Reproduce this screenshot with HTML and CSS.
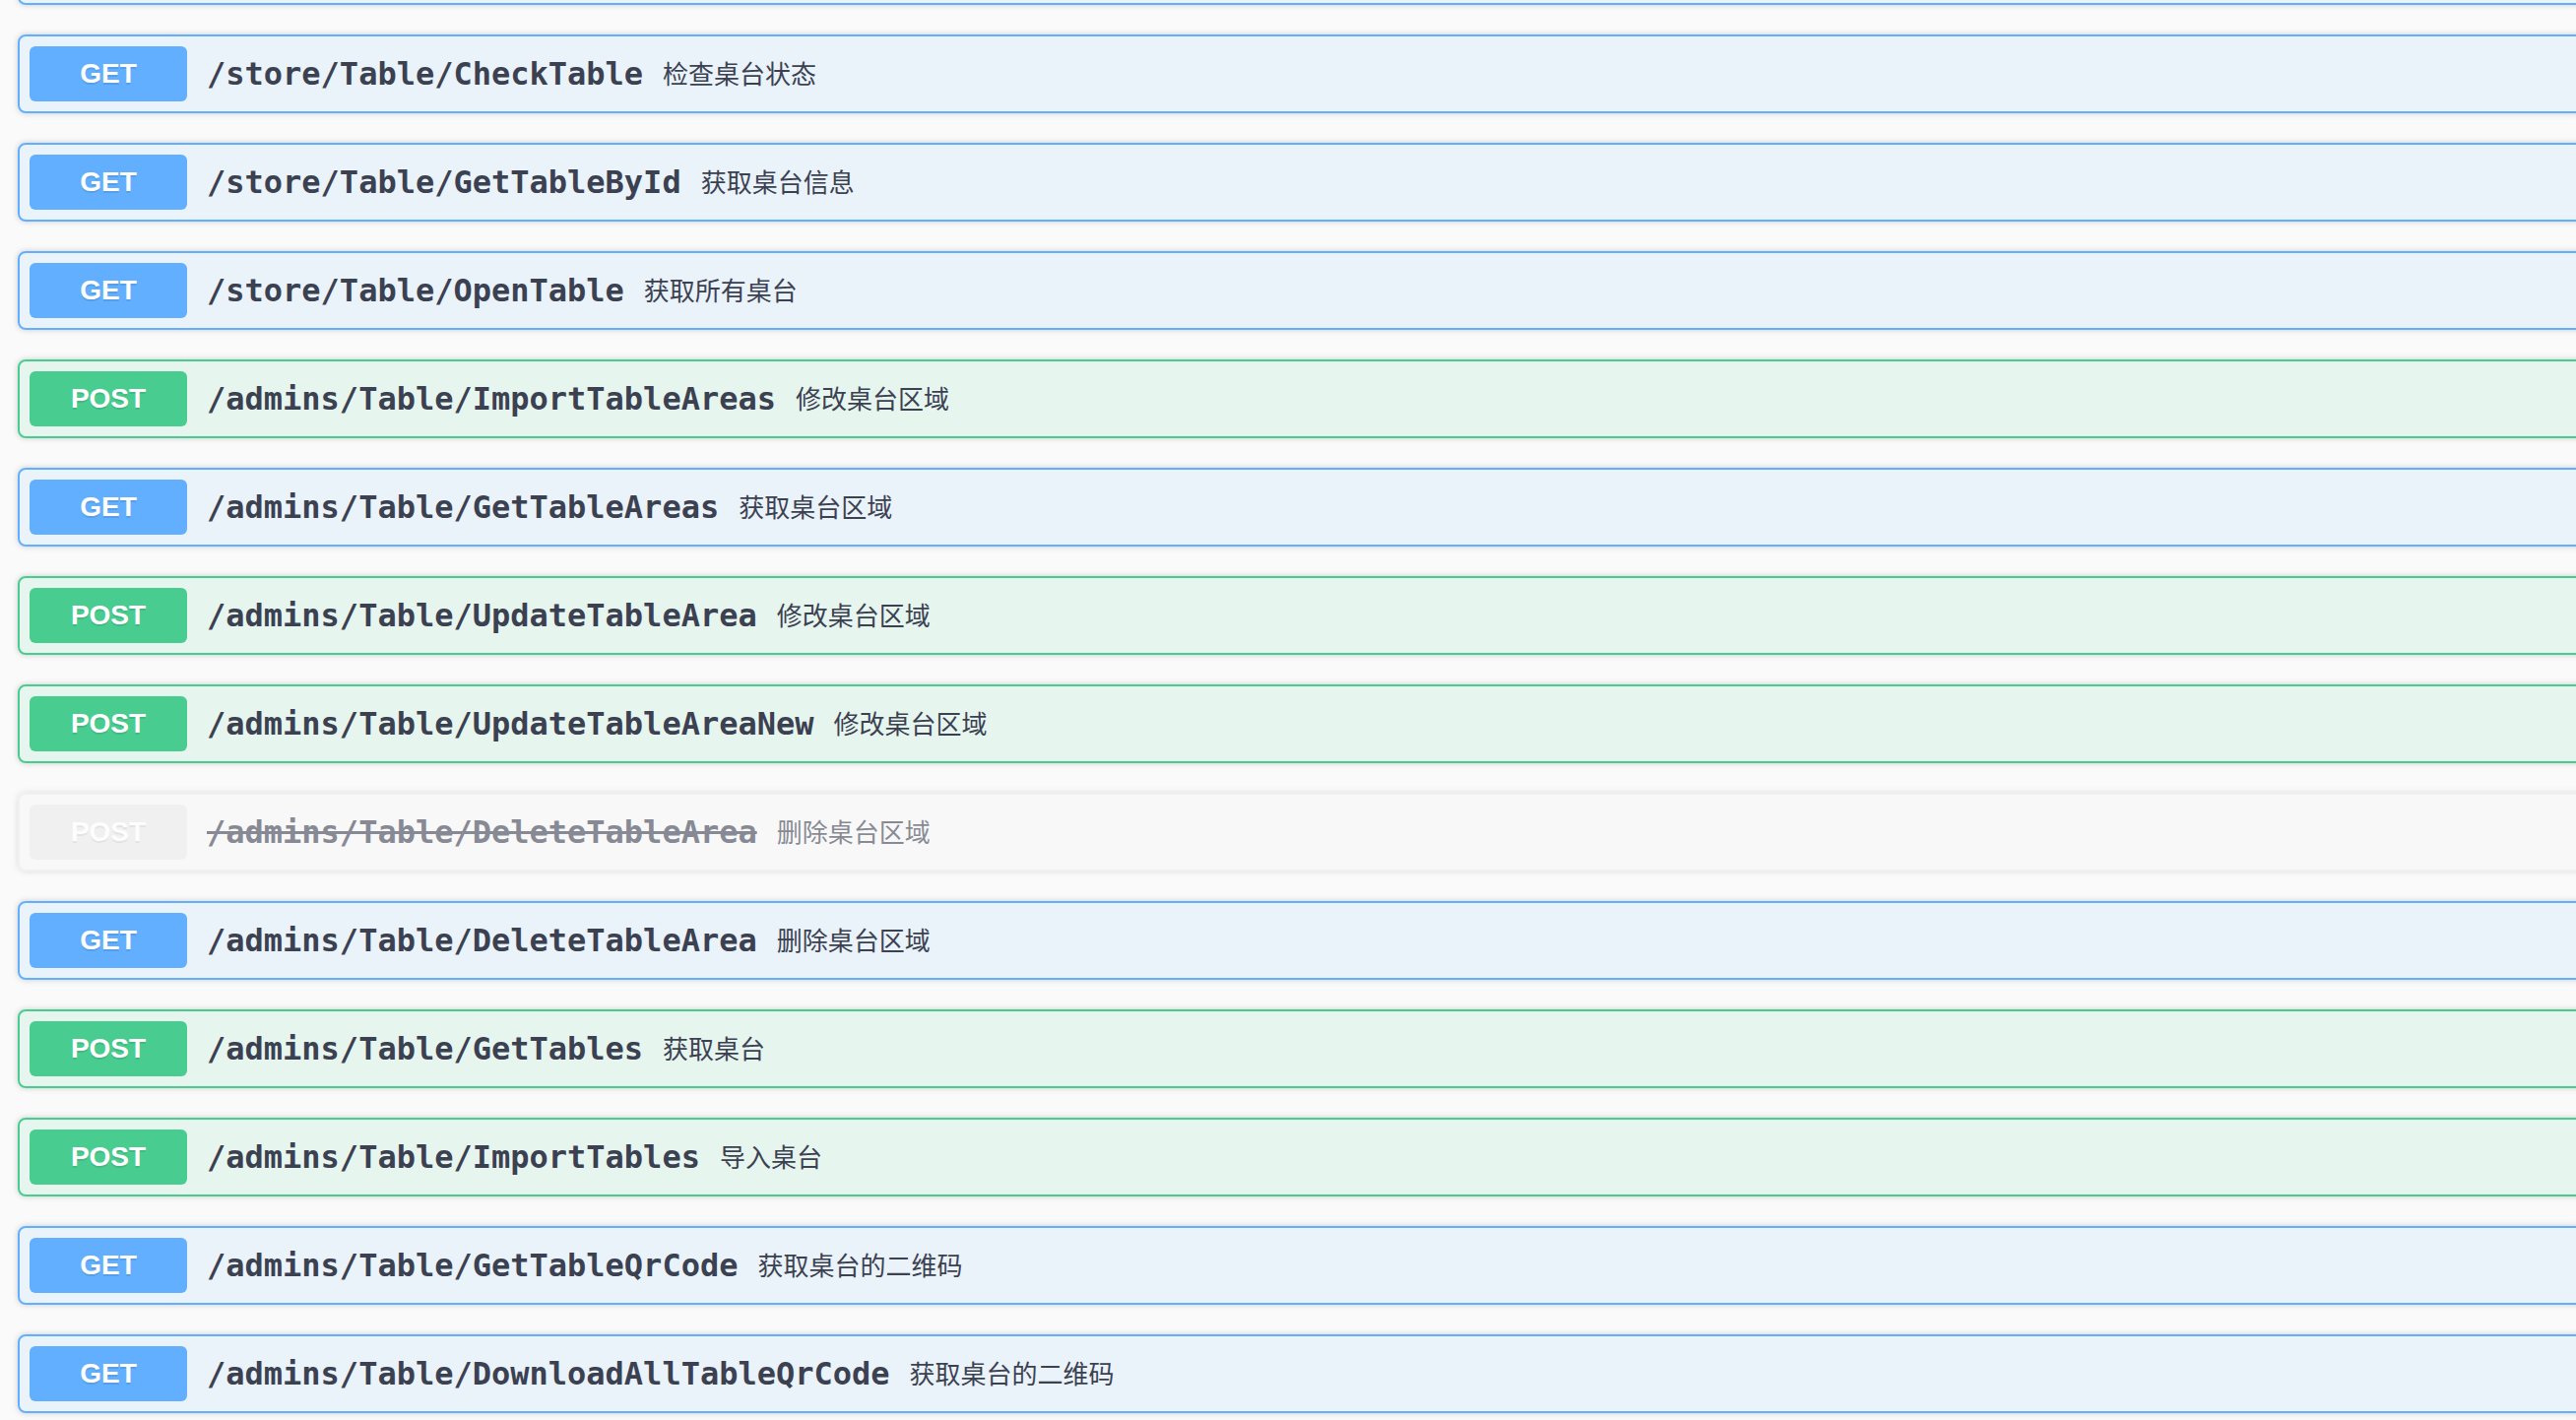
FILE: index.html
```html
<!DOCTYPE html>
<html lang="zh-CN">
<head>
<meta charset="utf-8">
<title>Table API</title>
<link rel="stylesheet" href="styles.css">
</head>
<body>
<div class="ops">
  <div class="opblock get"></div>
  <div class="opblock get"><div class="summary"><span class="method">GET</span><span class="path">/store/Table/CheckTable</span><span class="desc">检查桌台状态</span></div></div>
  <div class="opblock get"><div class="summary"><span class="method">GET</span><span class="path">/store/Table/GetTableById</span><span class="desc">获取桌台信息</span></div></div>
  <div class="opblock get"><div class="summary"><span class="method">GET</span><span class="path">/store/Table/OpenTable</span><span class="desc">获取所有桌台</span></div></div>
  <div class="opblock post"><div class="summary"><span class="method">POST</span><span class="path">/admins/Table/ImportTableAreas</span><span class="desc">修改桌台区域</span></div></div>
  <div class="opblock get"><div class="summary"><span class="method">GET</span><span class="path">/admins/Table/GetTableAreas</span><span class="desc">获取桌台区域</span></div></div>
  <div class="opblock post"><div class="summary"><span class="method">POST</span><span class="path">/admins/Table/UpdateTableArea</span><span class="desc">修改桌台区域</span></div></div>
  <div class="opblock post"><div class="summary"><span class="method">POST</span><span class="path">/admins/Table/UpdateTableAreaNew</span><span class="desc">修改桌台区域</span></div></div>
  <div class="opblock deprecated"><div class="summary"><span class="method">POST</span><span class="path strike">/admins/Table/DeleteTableArea</span><span class="desc">删除桌台区域</span></div></div>
  <div class="opblock get"><div class="summary"><span class="method">GET</span><span class="path">/admins/Table/DeleteTableArea</span><span class="desc">删除桌台区域</span></div></div>
  <div class="opblock post"><div class="summary"><span class="method">POST</span><span class="path">/admins/Table/GetTables</span><span class="desc">获取桌台</span></div></div>
  <div class="opblock post"><div class="summary"><span class="method">POST</span><span class="path">/admins/Table/ImportTables</span><span class="desc">导入桌台</span></div></div>
  <div class="opblock get"><div class="summary"><span class="method">GET</span><span class="path">/admins/Table/GetTableQrCode</span><span class="desc">获取桌台的二维码</span></div></div>
  <div class="opblock get"><div class="summary"><span class="method">GET</span><span class="path">/admins/Table/DownloadAllTableQrCode</span><span class="desc">获取桌台的二维码</span></div></div>
</div>
</body>
</html>
```

FILE: styles.css
```css
html, body {
  margin: 0;
  padding: 0;
  background: #fafafa;
  overflow: hidden;
  height: 1442px;
}

.ops {
  margin: -75px 0 0 18px;
  width: 2700px;
  display: flex;
  flex-direction: column;
  gap: 30px;
}

.opblock {
  border: 2px solid #000;
  border-radius: 8px;
  box-shadow: 0 0 6px rgba(0, 0, 0, 0.19);
  box-sizing: border-box;
  height: 80px;
}

.summary {
  display: flex;
  align-items: center;
  padding: 10px;
}

.method {
  min-width: 160px;
  box-sizing: border-box;
  padding: 12px 0;
  font-family: "Liberation Sans", Arial, sans-serif;
  font-size: 28px;
  line-height: 32px;
  font-weight: 700;
  color: #fff;
  text-align: center;
  border-radius: 6px;
  text-shadow: 0 2px 0 rgba(0, 0, 0, 0.1);
}

.path {
  padding: 0 20px;
  font-family: "DejaVu Sans Mono", "Liberation Mono", monospace;
  font-weight: 700;
  font-size: 32px;
  color: #3b4151;
  white-space: nowrap;
}

.strike {
  text-decoration: line-through;
}

.desc {
  font-family: "Noto Sans CJK SC", "Noto Sans", sans-serif;
  font-size: 26px;
  line-height: 30px;
  padding-bottom: 2px;
  color: #3b4151;
}

.get {
  border-color: #61affe;
  background: rgba(97, 175, 254, 0.1);
}

.get .method {
  background: #61affe;
}

.post {
  border-color: #49cc90;
  background: rgba(73, 204, 144, 0.1);
}

.post .method {
  background: #49cc90;
}

.deprecated {
  opacity: 0.6;
  border-color: #ebebeb;
  background: rgba(235, 235, 235, 0.1);
}

.deprecated .method {
  background: #ebebeb;
}
```
